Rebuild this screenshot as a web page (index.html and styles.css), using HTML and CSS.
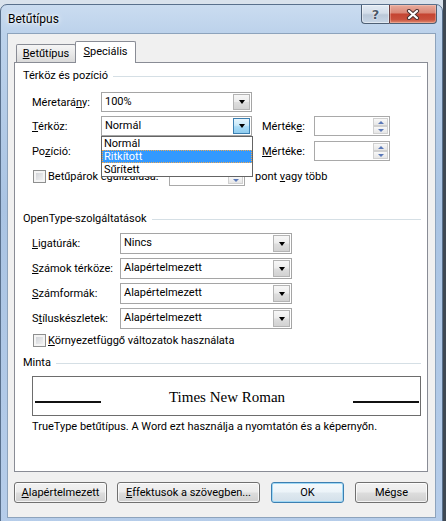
FILE: index.html
```html
<!DOCTYPE html>
<html lang="hu">
<head>
    <meta charset="UTF-8">
    <meta name="viewport" content="width=device-width, initial-scale=1.0">
    <title>Betűtípus</title>
    <link rel="stylesheet" href="styles.css">
</head>
<body>
    <div class="window">
        <div class="titlebar">
            <div class="title">Betűtípus</div>
            <div class="caption">
                <div class="cap-help">?</div>
                <div class="cap-close">
                    <svg width="14" height="11" viewBox="0 0 14 11">
                        <path d="M3 2 L11 9 M11 2 L3 9" stroke="#4a3030" stroke-width="4.2" stroke-linecap="round"/>
                        <path d="M3 2 L11 9 M11 2 L3 9" stroke="#ffffff" stroke-width="2.2" stroke-linecap="round"/>
                    </svg>
                </div>
            </div>
        </div>

        <div class="client">
            <div class="tabs">
                <div class="tab"><u>B</u>etűtípus</div>
                <div class="tab active"><u>S</u>peciális</div>
            </div>

            <div class="panel">
                <!-- Térköz és pozíció -->
                <div class="group">Térköz és pozíció</div>
                <div class="rows rows-spacing">
                    <div class="row">
                        <div class="lbl lbl-a">Méretará<u>n</u>y:</div>
                        <div class="combo combo-a"><span class="val">100%</span><span class="drop"></span></div>
                    </div>
                    <div class="row gap4">
                        <div class="lbl lbl-a"><u>T</u>érköz:</div>
                        <div class="combo combo-a"><span class="val">Normál</span><span class="drop hot"></span></div>
                        <div class="lbl lbl-m">Mérték<u>e</u>:</div>
                        <div class="spin"><span class="spin-btns"><span class="sb up"></span><span class="sb down"></span></span></div>
                    </div>
                    <div class="row gap5">
                        <div class="lbl lbl-a">Po<u>z</u>íció:</div>
                        <!-- value hidden under the open list -->
                        <div class="combo combo-a"><span class="val"></span><span class="drop"></span></div>
                        <div class="lbl lbl-m"><u>M</u>értéke:</div>
                        <div class="spin"><span class="spin-btns"><span class="sb up"></span><span class="sb down"></span></span></div>
                    </div>
                    <div class="row gap5">
                        <span class="check"></span>
                        <div class="lbl lbl-k">Betűpárok e<u>g</u>alizálása:</div>
                        <div class="spin"><span class="spin-btns"><span class="sb up"></span><span class="sb down"></span></span></div>
                        <div class="lbl lbl-p">pont <u>v</u>agy több</div>
                    </div>
                </div>

                <!-- OpenType -->
                <div class="group group-2">OpenType-szolgáltatások</div>
                <div class="rows rows-ot">
                    <div class="row tall">
                        <div class="lbl lbl-b"><u>L</u>igatúrák:</div>
                        <div class="combo combo-b"><span class="val">Nincs</span><span class="drop"></span></div>
                    </div>
                    <div class="row tall gap4">
                        <div class="lbl lbl-b"><u>S</u>zámok térköze:</div>
                        <div class="combo combo-b"><span class="val">Alapértelmezett</span><span class="drop"></span></div>
                    </div>
                    <div class="row tall gap4">
                        <div class="lbl lbl-b"><u>S</u>zámformák:</div>
                        <div class="combo combo-b"><span class="val">Alapértelmezett</span><span class="drop"></span></div>
                    </div>
                    <div class="row tall gap4">
                        <div class="lbl lbl-b">S<u>t</u>íluskészletek:</div>
                        <div class="combo combo-b"><span class="val">Alapértelmezett</span><span class="drop"></span></div>
                    </div>
                    <div class="row short">
                        <span class="check"></span>
                        <div class="lbl"><u>K</u>örnyezetfüggő változatok használata</div>
                    </div>
                </div>

                <!-- Minta -->
                <div class="group group-3">Minta</div>
                <div class="preview">
                    <span class="base-line"></span>
                    <span class="sample">Times New Roman</span>
                    <span class="base-line"></span>
                </div>
                <div class="note">TrueType betűtípus. A Word ezt használja a nyomtatón és a képernyőn.</div>

                <!-- open list of the Térköz combo -->
                <div class="droplist">
                    <div class="opt">Normál</div>
                    <div class="opt sel">Ritkított</div>
                    <div class="opt">Sűrített</div>
                </div>
            </div>

            <div class="buttons">
                <div class="btn-group">
                    <div class="btn btn-default"><u>A</u>lapértelmezett</div>
                    <div class="btn btn-effects"><u>E</u>ffektusok a szövegben...</div>
                </div>
                <div class="btn-group right">
                    <div class="btn btn-ok">OK</div>
                    <div class="btn btn-cancel">Mégse</div>
                </div>
            </div>
        </div>
    </div>
</body>
</html>
```

FILE: styles.css
```css
* {
    box-sizing: border-box;
}
body {
    margin: 0;
    width: 446px;
    height: 521px;
    overflow: hidden;
    font-family: Roboto, "Open Sans", sans-serif;
    font-size: 11px;
    color: #000;
    background: linear-gradient(to right, #d9e2ec 0, #d9e2ec 443px, #3e4853 443px);
}
u {
    text-decoration: underline;
    text-underline-offset: 1px;
}

/* window frame */
.window {
    width: 443px;
    height: 530px;
    margin-top: 4px;
    padding: 0 6px;
    border: 1px solid #59708c;
    border-radius: 7px 7px 0 0;
    background: linear-gradient(180deg, #cadcf0 0, #bcd2eb 28px, #aac4e3 200px, #b6cdea 100%);
}
.titlebar {
    height: 28px;
    display: flex;
    align-items: flex-start;
}
.title {
    margin: 7px 0 0 1px;
    font-size: 12px;
    line-height: 14px;
    text-shadow: 0 0 6px #fff, 0 0 3px #fff;
}
.caption {
    margin-left: auto;
    margin-right: -1px;
    display: flex;
}
.cap-help, .cap-close {
    height: 19px;
    border: 1px solid #4e5f74;
    border-top: none;
    display: flex;
    align-items: center;
    justify-content: center;
}
.cap-help {
    width: 28px;
    border-radius: 0 0 0 4px;
    border-right: none;
    background: linear-gradient(180deg, #e3ebf4 0, #d3dde9 45%, #bac8d8 55%, #c8d6e6 100%);
    box-shadow: inset 0 0 0 1px rgba(255, 255, 255, 0.45);
    font-family: "DejaVu Sans", sans-serif;
    font-weight: bold;
    font-size: 13px;
    color: #4b5868;
    text-shadow: 0 0 1px #fff, 0 0 2px #fff;
}
.cap-close {
    width: 48px;
    border-radius: 0 0 4px 0;
    border-left: 1px solid #6a3c3c;
    background: linear-gradient(180deg, #e8ab9c 0, #da8878 42%, #c54432 52%, #c9503c 80%, #df8a6f 100%);
    box-shadow: inset 0 0 0 1px rgba(255, 220, 210, 0.35);
}

/* client area */
.client {
    height: 485px;
    padding: 7px 7px 0 6px;
    background: #f0f0f0;
    border: 1px solid #8da3bc;
}
.tabs {
    height: 22px;
    margin-bottom: -1px;
    padding-left: 2px;
    display: flex;
    align-items: flex-end;
    position: relative;
    z-index: 1;
}
.tab {
    width: 60px;
    height: 18px;
    margin-bottom: 1px;
    border: 1px solid #898c95;
    border-bottom: none;
    border-radius: 2px 2px 0 0;
    background: linear-gradient(180deg, #f5f5f5 0, #e9e9e9 50%, #dadada 100%);
    text-align: center;
    line-height: 17px;
}
.tab.active {
    width: 61px;
    height: 22px;
    margin-bottom: 0;
    margin-left: -1px;
    background: #fff;
    line-height: 20px;
}

.panel {
    position: relative;
    height: 410px;
    padding: 6px 6px 0 8px;
    background: #fff;
    border: 1px solid #898c95;
}
.group {
    height: 14px;
    line-height: 14px;
    display: flex;
    align-items: center;
}
.group::after {
    content: "";
    flex: 1;
    height: 1px;
    margin-left: 5px;
    background: #d5dfe5;
}
.group-2 {
    margin-top: 26px;
}
.group-3 {
    margin-top: 9px;
}
.rows {
    padding-left: 9px;
}
.rows-spacing {
    margin-top: 9px;
}
.rows-ot {
    margin-top: 7px;
}
.row {
    height: 20px;
    display: flex;
    align-items: center;
}
.row.tall {
    height: 21px;
}
.row.short {
    height: 14px;
    margin-top: 4px;
}
.gap4 {
    margin-top: 4px;
}
.gap5 {
    margin-top: 5px;
}
.lbl {
    white-space: nowrap;
}
.lbl-a {
    width: 69px;
}
.lbl-b {
    width: 88px;
}
.lbl-m {
    width: 52px;
    margin-left: 10px;
}
.lbl-k {
    width: 121px;
}
.lbl-p {
    margin-left: 10px;
}

/* combo boxes */
.combo {
    height: 100%;
    display: flex;
    border: 1px solid #a5a5a5;
    background: #fff;
}
.combo-a {
    width: 151px;
}
.combo-b {
    width: 172px;
}
.combo .val {
    flex: 1;
    padding-left: 3px;
    line-height: 18px;
}
.drop {
    width: 17px;
    margin: 1px;
    border: 1px solid #b4b4b4;
    background: linear-gradient(180deg, #f7f7f7 0, #ececec 48%, #dedede 52%, #d2d2d2 100%);
    display: flex;
    align-items: center;
    justify-content: center;
}
.drop::before {
    content: "";
    border-left: 3.5px solid transparent;
    border-right: 3.5px solid transparent;
    border-top: 4px solid #000;
}
.drop.hot {
    border-color: #3c7fb1;
    background: linear-gradient(180deg, #e6f5fd 0, #c9e9f9 45%, #a9dbf6 55%, #8fcdf0 100%);
}

/* spinners */
.spin {
    width: 76px;
    height: 100%;
    padding: 1px;
    border: 1px solid #a9a9a9;
    background: #fff;
    display: flex;
    justify-content: flex-end;
}
.spin-btns {
    width: 15px;
    display: flex;
    flex-direction: column;
}
.sb {
    flex: 1;
    border: 1px solid #d0d0d0;
    background: linear-gradient(180deg, #f8f8f8, #e6e6e6);
    display: flex;
    align-items: center;
    justify-content: center;
}
.sb.up::before {
    content: "";
    border-left: 3.5px solid transparent;
    border-right: 3.5px solid transparent;
    border-bottom: 3px solid #5a78b8;
}
.sb.down::before {
    content: "";
    border-left: 3.5px solid transparent;
    border-right: 3.5px solid transparent;
    border-top: 3px solid #5a78b8;
}

/* checkbox */
.check {
    width: 13px;
    height: 13px;
    margin: 0 2px 0 1px;
    border: 1px solid #8e8f8f;
    background: linear-gradient(135deg, #c9ccd1 0, #e6e7e9 60%, #f6f6f6 100%);
    box-shadow: inset 0 0 0 2px #f4f4f4;
}

/* sample */
.preview {
    height: 40px;
    margin: 6px 0 0 9px;
    padding: 0 1px 9px 2px;
    border: 1px solid #6d6d6d;
    display: flex;
    align-items: flex-end;
    justify-content: space-between;
}
.sample {
    font-family: "Liberation Serif", serif;
    font-size: 15px;
}
.base-line {
    width: 66px;
    height: 2px;
    margin-bottom: 3px;
    background: #111;
}
.note {
    margin: 4px 0 0 9px;
    line-height: 14px;
}

/* open dropdown list */
.droplist {
    position: absolute;
    left: 86px;
    top: 73px;
    width: 152px;
    padding: 0;
    border: 1px solid #646464;
    background: #fff;
    z-index: 2;
}
.opt {
    height: 13px;
    line-height: 13px;
    padding-left: 2px;
}
.opt.sel {
    background: #3399ff;
    color: #fff;
    outline: 1px dotted #f0a850;
    outline-offset: -1px;
}

/* dialog buttons */
.buttons {
    margin-top: 10px;
    display: flex;
    justify-content: space-between;
}
.btn-group {
    display: flex;
    gap: 10px;
}
.btn-group.right {
    gap: 11px;
}
.btn {
    height: 21px;
    border: 1px solid #707070;
    border-radius: 3px;
    background: linear-gradient(180deg, #f2f2f2 0, #ebebeb 48%, #dddddd 52%, #cfcfcf 100%);
    box-shadow: inset 0 0 0 1px rgba(255, 255, 255, 0.75);
    text-align: center;
    line-height: 19px;
    white-space: nowrap;
}
.btn-default {
    width: 93px;
}
.btn-effects {
    width: 143px;
}
.btn-ok, .btn-cancel {
    width: 73px;
}
.btn-ok {
    border-color: #3c7fb1;
    background: linear-gradient(180deg, #f4f9fc 0, #ecf4f9 48%, #dfe9f0 52%, #d3e0ea 100%);
    box-shadow: inset 0 0 0 1px #9fd8f5;
}
```
